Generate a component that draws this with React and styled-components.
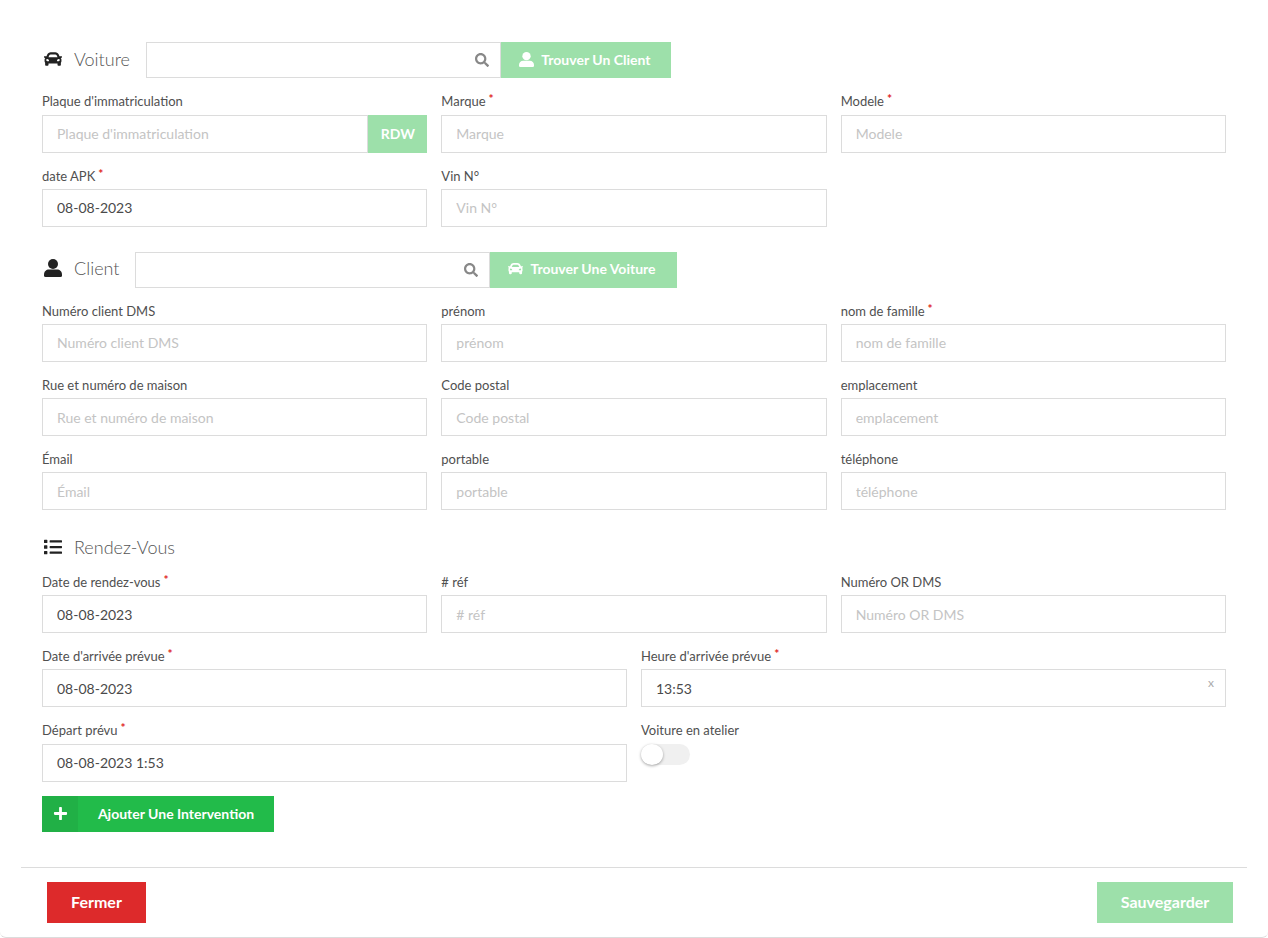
import React from 'react';
import styled, { createGlobalStyle } from 'styled-components';
import { FaCar, FaList, FaPlus, FaSearch } from 'react-icons/fa';

const GlobalStyle = createGlobalStyle`
    html, body {
        margin: 0;
        padding: 0;
        background: #fff;
        font-family: Lato, "Liberation Sans", sans-serif;
    }
    * {
        box-sizing: border-box;
    }
`

function UserIcon() {
    return (
        <svg width="1em" height="1em" viewBox="0 0 18 18" fill="currentColor">
            <circle cx="9" cy="5" r="5" />
            <path d="M0 15.5c0-3 2.2-5 5-5h8c2.8 0 5 2 5 5v1a1.5 1.5 0 0 1-1.5 1.5h-15A1.5 1.5 0 0 1 0 16.500z" />
        </svg>
    );
}

function Field({ label, required, tight, value, placeholder, children }) {
    return (
        <FieldWrap>
            <Label $tight={tight}>
                {label}
                {required && <Star>*</Star>}
            </Label>
            {children || <TextInput readOnly value={value || ''} placeholder={placeholder || label} />}
        </FieldWrap>
    );
}

function App() {
    return (
        <>
            <GlobalStyle />
            <Modal>
                <Body>
                    <SectionHead>
                        <HeadIcon><FaCar /></HeadIcon>
                        <HeadTitle $gap={16}>Voiture</HeadTitle>
                        <SearchBox>
                            <SearchInput readOnly value="" />
                            <SearchIcon><FaSearch /></SearchIcon>
                        </SearchBox>
                        <FindButton $width={170}><UserIcon /> Trouver Un Client</FindButton>
                    </SectionHead>
                    <Grid $columns={3} $top={12.6}>
                        <Field tight label="Plaque d'immatriculation">
                            <InputGroup>
                                <TextInput readOnly value="" placeholder="Plaque d'immatriculation" />
                                <RdwButton>RDW</RdwButton>
                            </InputGroup>
                        </Field>
                        <Field tight label="Marque" required />
                        <Field tight label="Modele" required />
                        <Field label="date APK" required value="08-08-2023" />
                        <Field label="Vin N°" />
                    </Grid>

                    <SectionHead $top={25}>
                        <HeadIcon><UserIcon /></HeadIcon>
                        <HeadTitle $gap={15}>Client</HeadTitle>
                        <SearchBox>
                            <SearchInput readOnly value="" />
                            <SearchIcon><FaSearch /></SearchIcon>
                        </SearchBox>
                        <FindButton $width={187}><FaCar /> Trouver Une Voiture</FindButton>
                    </SectionHead>
                    <Grid $columns={3} $top={11.84}>
                        <Field label="Numéro client DMS" />
                        <Field label="prénom" />
                        <Field label="nom de famille" required />
                        <Field label="Rue et numéro de maison" />
                        <Field label="Code postal" />
                        <Field label="emplacement" />
                        <Field label="Émail" />
                        <Field label="portable" />
                        <Field label="téléphone" />
                    </Grid>

                    <SectionHead $top={24.7} $plain>
                        <HeadIcon><FaList /></HeadIcon>
                        <HeadTitle $gap={15}>Rendez-Vous</HeadTitle>
                    </SectionHead>
                    <Grid $columns={3} $top={11.97}>
                        <Field label="Date de rendez-vous" required value="08-08-2023" />
                        <Field label="# réf" />
                        <Field label="Numéro OR DMS" />
                    </Grid>
                    <Grid $columns={2} $top={12.33}>
                        <Field label="Date d'arrivée prévue" required value="08-08-2023" />
                        <Field label="Heure d'arrivée prévue" required>
                            <ClearWrap>
                                <TextInput readOnly value="13:53" />
                                <ClearMark>x</ClearMark>
                            </ClearWrap>
                        </Field>
                        <Field tight label="Départ prévu" required value="08-08-2023 1:53" />
                        <Field tight label="Voiture en atelier">
                            <Toggle><Knob /></Toggle>
                        </Field>
                    </Grid>
                    <AddButton>
                        <AddIcon><FaPlus /></AddIcon>
                        <AddText>Ajouter Une Intervention</AddText>
                    </AddButton>
                </Body>
                <Footer>
                    <CloseButton>Fermer</CloseButton>
                    <SaveButton>Sauvegarder</SaveButton>
                </Footer>
            </Modal>
        </>
    );
}

export default App;

// Styled Components

const Modal = styled.div`
    width: 1268px;
    height: 938px;
    background: #fff;
    border-bottom: 1px solid #dcdcdc;
    border-radius: 0 0 6px 6px;
    overflow: hidden;
`

const Body = styled.div`
    padding: 42px 42px 0 42px;
    height: 867px;
`

const SectionHead = styled.div`
    display: flex;
    align-items: center;
    height: ${p => p.$plain ? '24px' : '36px'};
    padding-top: ${p => p.$plain ? '3px' : '0'};
    margin-top: ${p => p.$top || 0}px;
`

const HeadIcon = styled.span`
    display: flex;
    align-items: center;
    width: 32px;
    height: 18px;
    margin-top: -3px;
    padding-left: 2px;
    font-size: 18px;
    color: #222;
`

const HeadTitle = styled.span`
    font-size: 18px;
    font-weight: 300;
    line-height: 22px;
    margin-top: -3px;
    color: #555;
    margin-right: ${p => p.$gap}px;
`

const SearchBox = styled.div`
    position: relative;
    width: 355px;
    height: 36px;
`

const SearchInput = styled.input`
    width: 100%;
    height: 100%;
    border: 1px solid #dcdcdc;
    outline: none;
    background: #fff;
`

const SearchIcon = styled.span`
    position: absolute;
    right: 12px;
    top: 11px;
    font-size: 14px;
    line-height: 14px;
    color: #888;
`

const FindButton = styled.button`
    display: flex;
    align-items: center;
    justify-content: center;
    gap: 7px;
    width: ${p => p.$width}px;
    height: 36px;
    padding: 0 2px 2px 0;
    border: none;
    background: #9de0aa;
    color: #fff;
    font-family: inherit;
    font-size: 14px;
    font-weight: 700;
    svg {
        font-size: 15px;
    }
`

const Grid = styled.div`
    display: grid;
    grid-template-columns: repeat(${p => p.$columns}, 1fr);
    column-gap: 14px;
    row-gap: 12.33px;
    margin-top: ${p => p.$top || 0}px;
`

const FieldWrap = styled.div`
    display: flex;
    flex-direction: column;
    min-width: 0;
`

const Label = styled.label`
    display: block;
    height: ${p => p.$tight ? '21px' : '22px'};
    margin-bottom: ${p => p.$tight ? '3px' : '2px'};
    font-size: 13px;
    line-height: ${p => p.$tight ? '21px' : '22px'};
    color: #505050;
`

const Star = styled.sup`
    color: #e01f1f;
    font-size: 12px;
    font-weight: 700;
    line-height: 0;
    vertical-align: 3px;
    margin-left: 3px;
`

const TextInput = styled.input`
    display: block;
    width: 100%;
    height: 38px;
    padding: 0 14px;
    border: 1px solid #dcdcdc;
    outline: none;
    background: #fff;
    color: #4a4a4a;
    font-family: inherit;
    font-size: 14px;
    &::placeholder {
        color: #c4c4c4;
        opacity: 1;
    }
`

const InputGroup = styled.div`
    display: flex;
`

const RdwButton = styled.button`
    flex: none;
    width: 59px;
    height: 38px;
    padding: 0 0 1px 0;
    border: none;
    background: #9de0aa;
    color: #fff;
    font-family: inherit;
    font-size: 14px;
    font-weight: 700;
`

const ClearWrap = styled.div`
    position: relative;
`

const ClearMark = styled.span`
    position: absolute;
    right: 12px;
    top: 6px;
    font-size: 12px;
    color: #aaa;
`

const Toggle = styled.div`
    position: relative;
    width: 49px;
    height: 21px;
    border-radius: 11px;
    background: #f0f0f0;
`

const Knob = styled.div`
    position: absolute;
    left: 0;
    top: 0;
    width: 22px;
    height: 21px;
    border-radius: 50%;
    background: #fff;
    box-shadow: 0 1px 3px rgba(0,0,0,0.35);
`

const AddButton = styled.button`
    display: flex;
    align-items: stretch;
    width: 232px;
    height: 36px;
    margin-top: 14px;
    padding: 0;
    border: none;
    background: #22bb4a;
    color: #fff;
    font-family: inherit;
    font-size: 14px;
    font-weight: 700;
`

const AddIcon = styled.span`
    display: flex;
    align-items: center;
    justify-content: center;
    width: 36px;
    background: #21b046;
    font-size: 15px;
`

const AddText = styled.span`
    flex: 1;
    line-height: 36px;
    text-align: center;
`

const Footer = styled.div`
    display: flex;
    justify-content: space-between;
    align-items: flex-start;
    margin: 0 21px;
    padding: 14px 14px 0 26px;
    border-top: 1px solid #dcdcdc;
`

const CloseButton = styled.button`
    width: 99px;
    height: 41px;
    padding: 0 0 2px 0;
    border: none;
    background: #dd2a2b;
    color: #fff;
    font-family: inherit;
    font-size: 16px;
    font-weight: 700;
`

const SaveButton = styled.button`
    width: 136px;
    height: 41px;
    padding: 0 0 2px 0;
    border: none;
    background: #9de0aa;
    color: #fff;
    font-family: inherit;
    font-size: 16px;
    font-weight: 700;
`
